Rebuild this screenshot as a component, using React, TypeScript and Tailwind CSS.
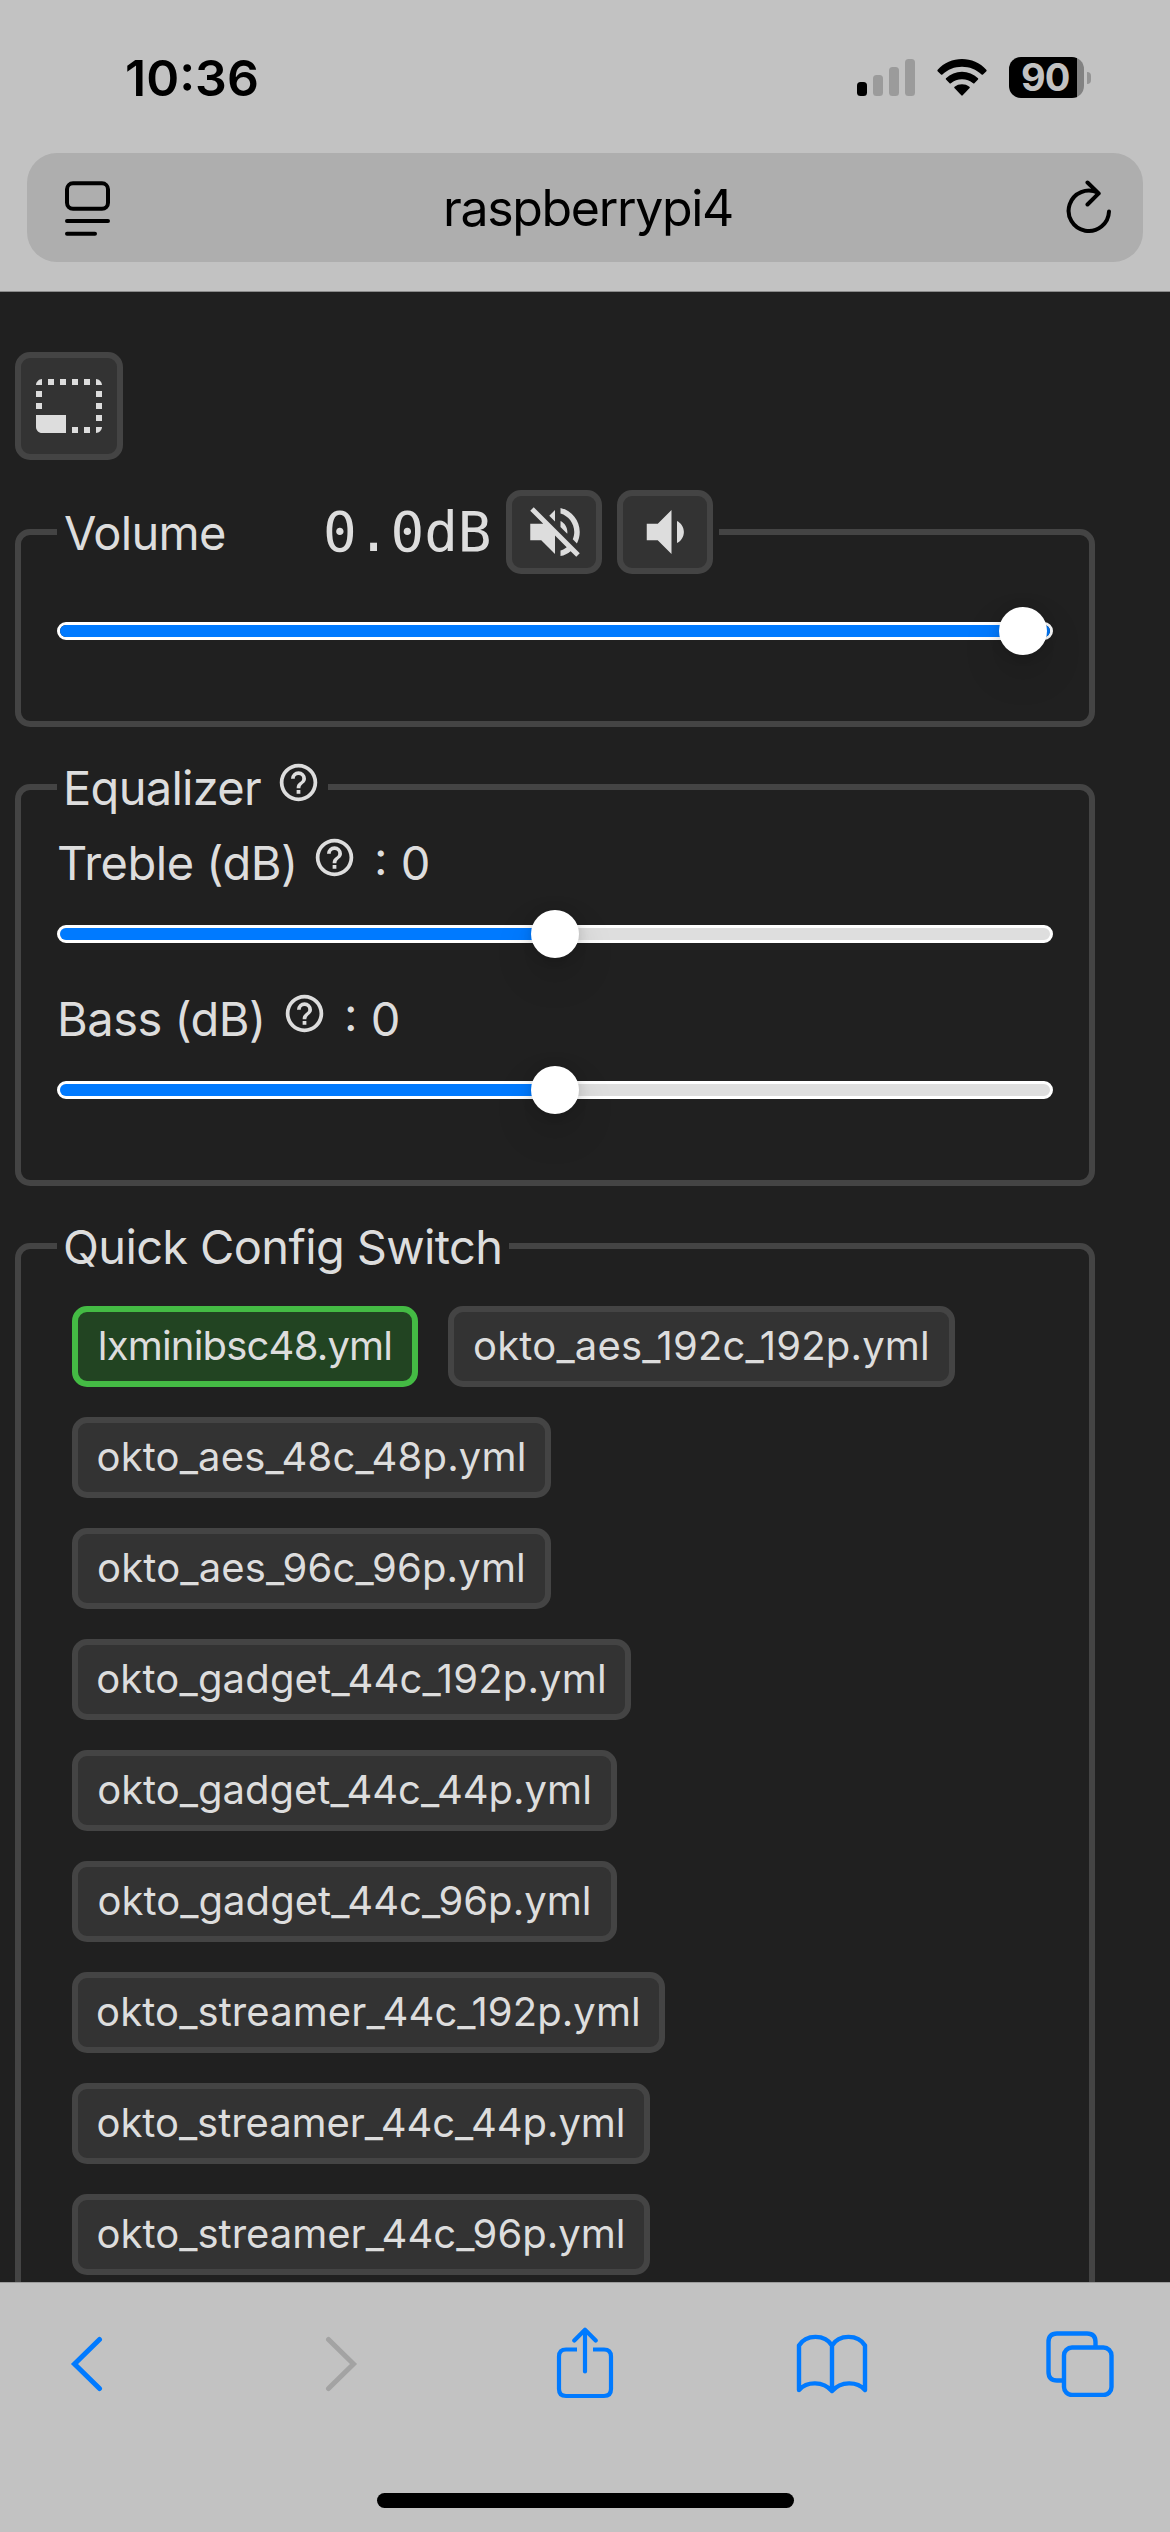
import React from "react";

const PATHS = {
  resize:
    "M23 15h-2v2h2v-2zm0-4h-2v2h2v-2zm0 8h-2v2c1 0 2-1 2-2zM15 3h-2v2h2V3zm8 4h-2v2h2V7zm-2-4v2h2c0-1-1-2-2-2zM3 21h8v-6H1v4c0 1.1.9 2 2 2zM3 7H1v2h2V7zm12 12h-2v2h2v-2zm4-16h-2v2h2V3zm0 16h-2v2h2v-2zM3 3C2 3 1 4 1 5h2V3zm0 8H1v2h2v-2zm8-8H9v2h2V3zM7 3H5v2h2V3z",
  mute:
    "M12,4L9.91,6.09L12,8.18M4.27,3L3,4.27L7.73,9H3V15H7L12,20V13.27L16.25,17.53C15.58,18.04 14.83,18.46 14,18.7V20.77C15.38,20.45 16.63,19.82 17.68,18.96L19.73,21L21,19.73L12,10.73M19,12C19,12.94 18.8,13.82 18.46,14.64L19.97,16.15C20.62,14.91 21,13.5 21,12C21,7.72 18,4.14 14,3.23V5.29C16.89,6.15 19,8.83 19,12M16.5,12C16.5,10.23 15.5,8.71 14,7.97V10.18L16.45,12.63C16.5,12.43 16.5,12.21 16.5,12Z",
  dim: "M5,9V15H9L14,20V4L9,9M18.5,12C18.5,10.23 17.5,8.71 16,7.97V16C17.5,15.29 18.5,13.76 18.5,12Z",
  help: "M11,18H13V16H11V18M12,2A10,10 0 0,0 2,12A10,10 0 0,0 12,22A10,10 0 0,0 22,12A10,10 0 0,0 12,2M12,20C7.59,20 4,16.41 4,12C4,7.59 7.59,4 12,4C16.41,4 20,7.59 20,12C20,16.41 16.41,20 12,20M12,6A4,4 0 0,0 8,10H10A2,2 0 0,1 12,8A2,2 0 0,1 14,10C14,12 11,11.75 11,15H13C13,12.75 16,12.5 16,10A4,4 0 0,0 12,6Z",
};

function Glyph({ d, className }: { d: string; className: string }) {
  return (
    <svg viewBox="0 0 24 24" fill="currentColor" className={"shrink-0 " + className}>
      <path d={d} />
    </svg>
  );
}

function StatusBar() {
  return (
    <div className="flex h-[153px] items-start pr-[79px] pl-[125px]">
      <div className="mt-[48px] text-[50px] leading-[60px] font-semibold">10:36</div>
      <svg width="58" height="37" viewBox="0 0 58 37" className="mt-[59px] ml-auto">
        <rect x="0" y="23" width="10" height="14" rx="3.5" fill="#000" />
        <rect x="16" y="16" width="10" height="21" rx="3.5" fill="#9b9b9b" />
        <rect x="32" y="8" width="10" height="29" rx="3.5" fill="#9b9b9b" />
        <rect x="48" y="0" width="10" height="37" rx="3.5" fill="#9b9b9b" />
      </svg>
      <svg width="50" height="37" viewBox="0 0 50 37" className="mt-[59px] ml-[22px]">
        <path d="M0.6 12.2 Q0 11.5 0.7 10.7 C7 3.8 15.800 0 25 0 C34.200 0 43 3.800 49.300 10.700 Q50 11.500 49.400 12.200 L46 15.500 Q45.300 16 44.600 15.400 C39.200 10.400 32.400 7.700 25 7.700 C17.600 7.700 10.800 10.400 5.400 15.400 Q4.700 16 4 15.500 Z" />
        <path d="M9 20.600 Q8.400 19.900 9 19.200 C13.400 15 19 12.800 25 12.800 C31 12.800 36.600 15 41 19.200 Q41.600 19.900 41 20.600 L37.400 24.200 Q36.800 24.700 36.100 24.200 C33 21.500 29.200 20.200 25 20.200 C20.800 20.200 17 21.500 13.900 24.200 Q13.200 24.700 12.600 24.200 Z" />
        <path d="M17.400 29 Q16.900 28.300 17.600 27.700 C19.700 26 22.200 25.200 25 25.200 C27.800 25.200 30.300 26 32.400 27.700 Q33.100 28.300 32.600 29 L25.700 36.300 Q25 37 24.300 36.300 Z" />
      </svg>
      <div className="mt-[57px] ml-[22px] flex items-center">
        <div className="flex h-[41px] w-[75px] items-center rounded-[12px] bg-linear-to-r from-black from-[68px] to-[#828282] to-[68px] pl-[12px]">
          <span className="text-[38px] leading-[41px] font-bold tracking-[-1px] text-[#c2c2c2]">90</span>
        </div>
        <div className="ml-[3px] h-[12px] w-[4px] rounded-r-full bg-[#949494]" />
      </div>
    </div>
  );
}

function AddressBar() {
  return (
    <div className="mx-[27px] flex h-[109px] items-center rounded-[30px] bg-[#aeaeae]">
      <svg width="46" height="56" viewBox="0 0 46 56" fill="none" stroke="#000" strokeWidth="4" strokeLinecap="round" className="ml-[38px]">
        <rect x="2" y="3.300" width="41" height="25.500" rx="6" />
        <path d="M2 41H43M2 53.700H30" />
      </svg>
      <div className="w-[954px] text-center text-[50px] leading-[60px] tracking-[-1.35px] text-black">raspberrypi4</div>
      <svg width="48" height="58" viewBox="0 0 48 58" fill="none" stroke="#000" strokeWidth="4" strokeLinecap="round" strokeLinejoin="round">
        <path d="M44 32.500A20.200 20.200 0 1 1 33 13.800M22.500 3.500L33.700 14.400L22.500 25.500" />
      </svg>
    </div>
  );
}

function Slider({ fill, thumb, className }: { fill: string; thumb: string; className: string }) {
  return (
    <div className={"relative flex h-[48px] w-[996px] items-center " + className}>
      <div className="h-[18px] w-full overflow-hidden rounded-[9px] border-[3px] border-white bg-[#dedede]">
        <div className={"h-full bg-[#007aff] " + fill} />
      </div>
      <div
        className={
          "absolute top-0 size-[48px] rounded-full bg-white shadow-[0_1px_12px_rgba(0,0,0,0.15),0_18px_39px_rgba(0,0,0,0.15)] " + thumb
        }
      />
    </div>
  );
}

const fieldset = "w-[1080px] rounded-[15px] border-[6px] border-[#444] pl-[36px]";

function Param({ label, labelWidth, className }: { label: string; labelWidth: string; className: string }) {
  return (
    <div className={"flex h-[58px] whitespace-pre text-[47px] leading-[58px] " + className}>
      <span className={"tracking-[-0.5px] " + labelWidth}>{label}</span>
      <Glyph d={PATHS.help} className="mt-px size-[45px]" />
      <span className="ml-[17px]">: 0</span>
    </div>
  );
}

const CONFIGS = [
  { name: "lxminibsc48.yml", size: "w-[346px] tracking-[-0.8px]", active: true },
  { name: "okto_aes_192c_192p.yml", size: "w-[507px] tracking-[0.2px]" },
  { name: "okto_aes_48c_48p.yml", size: "w-[479px] tracking-[0.15px]" },
  { name: "okto_aes_96c_96p.yml", size: "w-[479px] tracking-[0.15px]" },
  { name: "okto_gadget_44c_192p.yml", size: "w-[559px] tracking-[0.18px]" },
  { name: "okto_gadget_44c_44p.yml", size: "w-[545px]" },
  { name: "okto_gadget_44c_96p.yml", size: "w-[545px] tracking-[0.05px]" },
  { name: "okto_streamer_44c_192p.yml", size: "w-[593px] tracking-[0.1px]" },
  { name: "okto_streamer_44c_44p.yml", size: "w-[578px] tracking-[-0.06px]" },
  { name: "okto_streamer_44c_96p.yml", size: "w-[578px]" },
];

function ToolBar() {
  return (
    <div className="h-[250px] border-t border-[#9c9c9c] bg-[#c2c2c2]">
      <div className="flex h-[161px] items-center text-[#007aff]">
        <svg width="36" height="56" viewBox="0 0 36 56" fill="none" stroke="currentColor" strokeWidth="5" strokeLinecap="round" strokeLinejoin="miter" className="ml-[68px]">
          <path d="M31.500 3.500L6.500 28L31.500 52.500" />
        </svg>
        <svg width="36" height="56" viewBox="0 0 36 56" fill="none" stroke="#a3a3a3" strokeWidth="5" strokeLinecap="round" strokeLinejoin="miter" className="ml-[220px]">
          <path d="M4.500 3.500L29.500 28L4.500 52.500" />
        </svg>
        <svg width="58" height="74" viewBox="0 0 58 74" fill="none" stroke="currentColor" strokeWidth="4.200" strokeLinejoin="round" className="ml-[196px]">
          <path d="M21 22.500H10Q3 22.500 3 29.500V62Q3 69 10 69H48Q55 69 55 62V29.500Q55 22.500 48 22.500H37" />
          <path d="M29 3V44.500M18.300 13.500L29 2.700L39.700 13.500" strokeLinecap="round" />
        </svg>
        <svg width="72" height="62" viewBox="0 0 72 62" fill="none" stroke="currentColor" strokeWidth="4.400" strokeLinecap="round" strokeLinejoin="round" className="ml-[182px]">
          <path d="M36 12.500C29 1 10 1 3 12.500V57C11 48 27 48 36 58C45 48 61 48 69 57V12.500C62 1 43 1 36 12.500V58" />
        </svg>
        <svg width="68" height="66" viewBox="0 0 68 66" fill="none" stroke="currentColor" strokeWidth="4.400" className="ml-[178px]">
          <path d="M16 49.500H11Q2.500 49.500 2.500 41V11Q2.500 2.500 11 2.500H41Q49.500 2.500 49.500 11V16" />
          <rect x="18" y="16.500" width="47.500" height="47.500" rx="8" />
        </svg>
      </div>
      <div className="mx-auto mt-[49px] h-[15px] w-[417px] rounded-full bg-black" />
    </div>
  );
}

export default function App() {
  return (
    <div className="flex h-[2532px] w-[1170px] flex-col overflow-hidden bg-[#202020] font-['Inter',sans-serif]">
      <header className="h-[292px] shrink-0 border-b border-[#8a8a8a] bg-[#c2c2c2] text-black">
        <StatusBar />
        <AddressBar />
      </header>

      <main className="h-[1990px] shrink-0 overflow-hidden pt-[60px] pl-[15px] text-[#ddd]">
        <button className="flex size-[108px] items-center justify-center rounded-[15px] border-[6px] border-[#444] bg-[#333]">
          <Glyph d={PATHS.resize} className="size-[72px]" />
        </button>

        <fieldset className={"mt-[30px] h-[237px] " + fieldset}>
          <legend className="flex h-[84px] w-[662px] items-center pl-[7px]">
            <span className="mt-[2px] w-[259px] text-[47px] leading-[58px] tracking-[-0.7px]">Volume</span>
            <span className="w-[183px] font-['DejaVu_Sans_Mono',monospace] text-[56px] leading-[58px]">0.0dB</span>
            <button className="flex h-[84px] w-[96px] shrink-0 items-center justify-center rounded-[15px] border-[6px] border-[#444] bg-[#333] pl-[2px]">
              <Glyph d={PATHS.mute} className="size-[66px]" />
            </button>
            <button className="ml-[15px] flex h-[84px] w-[96px] shrink-0 items-center justify-center rounded-[15px] border-[6px] border-[#444] bg-[#333] pl-[2px]">
              <Glyph d={PATHS.dim} className="size-[66px]" />
            </button>
          </legend>
          <Slider fill="w-full" thumb="left-[942px]" className="mt-[33px]" />
        </fieldset>

        <fieldset className={"mt-[31px] h-[428px] " + fieldset}>
          <legend className="flex h-[58px] w-[271px] pl-[6px] text-[47px] leading-[60px]">
            <span className="w-[213px] tracking-[-0.7px]">Equalizer</span>
            <Glyph d={PATHS.help} className="mt-[2px] size-[45px]" />
          </legend>
          <Param label="Treble (dB)" labelWidth="w-[255px]" className="mt-[18px]" />
          <Slider fill="w-1/2" thumb="left-[474px]" className="mt-[18px]" />
          <Param label="Bass (dB)" labelWidth="w-[225px]" className="mt-[32px]" />
          <Slider fill="w-1/2" thumb="left-[474px]" className="mt-[18px]" />
        </fieldset>

        <fieldset className={"mt-[31px] h-[1200px] " + fieldset}>
          <legend className="h-[58px] w-[452px] whitespace-nowrap pl-[6px] text-[47px] leading-[60px] tracking-[-0.65px]">Quick Config Switch</legend>
          <div className="mt-[31px] ml-[15px] flex w-[966px] flex-wrap gap-[30px]">
            {CONFIGS.map((c) => (
              <button
                key={c.name}
                className={
                  "flex h-[81px] items-center justify-center whitespace-nowrap rounded-[15px] border-[6px] pb-px text-[40px] leading-none " +
                  (c.active ? "border-[#4b4] bg-[#242] " : "border-[#444] bg-[#333] ") +
                  c.size
                }
              >
                {c.name}
              </button>
            ))}
          </div>
        </fieldset>
      </main>

      <ToolBar />
    </div>
  );
}
